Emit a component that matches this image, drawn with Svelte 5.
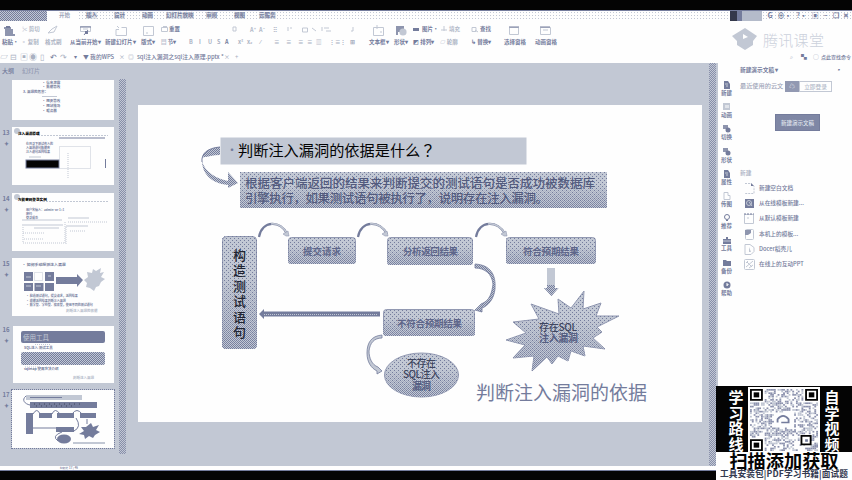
<script>
  const tabs = [[59,'开始'],[86,'插入'],[114,'设计'],[142,'动画'],[166,'幻灯片放映'],[206,'审阅'],[234,'视图'],[259,'云服务'],[300,'']];
  const labels = [[2,'粘贴·',1],[21,'▫ 复制'],[45,'格式刷'],[70,'从当前开始▾',1],[105,'新建幻灯片▾',1],[141,'版式▾',1],[161,'▤ 节▾',1],[189,'B'],[199,'I'],[208,'U'],[217,'S'],[225,'A',1],[238,'x²'],[247,'x₂'],[260,'⁄'],[274,'≡'],[286,'≡'],[298,'≡'],[307,'≡'],[316,'▥'],[329,'⋮≡'],[340,'⋮'],[350,'⊞'],[369,'文本框▾',1],[394,'形状▾',1],[413,'◩ 排列▾',1],[440,'▱ 轮廓'],[471,'↳ 替换▾',1],[504,'选择窗格',1],[535,'动画窗格',1],[570,'']];
  const quick = [[0,'▱'],[10,'⊟'],[20,'▣'],[29,'◉'],[40,'▯'],[50,'↶',1],[60,'↷'],[74,'▾',1],[83,'▼ 我的WPS',1],[119,'×'],[128,'◎'],[137,'sql注入漏洞之sql注入原理.pptx *',1],[224,'×'],[235,'+'],[790,'⌕'],[801,'▚',1],[813,'○'],[821,'点此查找命令',1],[852,'']];
  const widths = (rows) => rows.slice(0, -1).map((r, i) => ({ t: r[1], d: r[2], w: rows[i + 1][0] - r[0] }));
  const rail = ['新建','动画','切换','形状','属性','传图','推荐','工具','备份','帮助'];
  const news = ['新建空白文档','从在线模板新建...','从默认模板新建','本机上的模板...','Docer稻壳儿','在线上的互动PPT'];
  let seed = 29;
  const rnd = () => (seed = (seed * 16807) % 2147483647) / 2147483647;
  const cells = [];
  for (let y = 0; y < 37; y++) for (let x = 0; x < 37; x++) {
    const r = rnd();
    if ((x < 8 && y < 8) || (x > 28 && y < 8) || (x < 8 && y > 28) || (x > 12 && x < 24 && y > 13 && y < 23) || (x > 26 && x < 33 && y > 26 && y < 33)) continue;
    if (r < 0.5) cells.push([x, y, r < 0.27 ? '#8b91ad' : '#bfc5d2']);
  }
  const boxes = [[288,237,68,27,'提交请求',303,38],[387,237,86,28,'分析返回结果',403,55],[506,237,90,27,'符合预期结果',523,56],[383,309,92,27,'不符合预期结果',397,65]];
  const arcs = ['M259 237C262 220 281 220 287 234','M358 237C361 220 380 220 387 234','M476 237C479 220 498 220 505 234'];
  const star = '584,291 571,308 558,299 559,314 531,304 539,319 513,322 526,333 506,340 525,345 513,358 534,356 532,371 547,357 552,364 558,356 568,361 571,351 585,356 583,346 605,349 593,338 602,332 597,327 619,316 596,316 601,303 583,309';
</script>

{#snippet mini()}
  <rect x="14" y="5" width="56" height="5" class="l"/><path d="M18 7.500H50" class="s"/><rect x="18" y="12" width="67" height="6" class="k"/><path d="M22 14h50M24 16h40" stroke="#40465f" stroke-dasharray="1 4"/>
  <path d="M14 6C9 10 13 14 18 15M21 24Q25 17 28 24M40 24Q43 17 48 24M60 24Q65 17 70 24M64 28Q70 37 62 41M50 42Q39 46 46 51" class="s"/>
  <rect x="14" y="23" width="7" height="21" class="k"/><rect x="27" y="23" width="13" height="5" class="k"/><rect x="45" y="23" width="17" height="5" class="k"/><rect x="68" y="23" width="16" height="5" class="k"/><rect x="44" y="37" width="18" height="5" class="k"/>
  <path d="M21 38H44M75 29V34" class="s"/><ellipse cx="52" cy="49" rx="7" ry="4.500" class="k"/>
  <path d="M79 33l2 4 6-2-3 5 4 2-5 3-2 3-4-2-4 3-1-4-5-1 5-3-3-4 5 0z" class="k"/><rect x="61" y="52" width="32" height="2" class="l"/>
{/snippet}

<div class="app">
  <div class="black"></div>
  <header class="tabs">
    <div class="brand"></div><div class="active"></div>
    <div class="tabrow">{#each widths(tabs) as t}<span style:width={t.w + 'px'}><b>{t.t}</b></span>{/each}</div>
    <div class="user"></div><div class="win"><b>G</b><b>⊕·</b><b>?·</b><b>▣</b><b>–</b><b>❐</b><b>✕</b></div>
  </header>
  <section class="ribbon">
    <div class="icons">
      <svg width="730" height="17" viewBox="0 20 730 17">
        <path d="M4 26h7v2h2v5h2v2H5v-7H4zM396 25h8v6h-6v3h-2z" class="m"/><circle cx="403" cy="31" r="3.600" class="l"/>
        <path d="M6 25h4v2H6z" class="k"/>
        <path d="M80.500 25.500h10v5h-10zM83 28h5M119 28.500h-3v6h10.500v-8h-5M117 25l2 2M143.500 25.500h10v9h-10zM146 32h2M161.500 26.500h6v4h-6zM163 25.500h4M233 26h3v4h-3zM312 27l4 3M322 26v4M324 27h5M326 30h5M288 26v4M290 27h2M353 26v4h-2M302.500 27h5v4h-5zM373.500 26.500h10v8h-10zM377 24v4M381 30v2M509.500 26.500h9v7h-9zM540.500 26.500h10v7h-10zM543 29h5M472 26.500h4v4h-4zM475 29l3 2M441 29h6M444 25v5M48 32l4-4 5-3-3 6z" class="ls"/>
        <path d="M80 26h11M509 26h10M540 26h10M84 34l4-5" class="s"/><path d="M85 30h3v3h-3zM413 27h6v3h-6z" class="k"/>
        <g class="tiny"><text x="22" y="30">✂ 剪切</text><text x="169" y="30" class="dk">重置</text><text x="250" y="31">A⁺</text><text x="259" y="31">A⁻</text><text x="273" y="31">⠿</text><text x="422" y="30" class="dk">图片·</text><text x="449" y="30">填充</text><text x="480" y="30" class="dk">查找</text></g>
      </svg>
      <div class="brandlogo"><svg width="27" height="24" viewBox="0 0 27 24"><path d="M13 0 25 8 21 13V17L13 22 5 17V13L0 8Z" class="l"/><path d="M11 6v5l5-2z" fill="#fefefe"/></svg><span>腾讯课堂</span></div>
    </div>
    <div class="labels">{#each widths(labels) as t}<span class:dk={t.d} style:width={t.w + 'px'}>{t.t}</span>{/each}</div>
    <div class="quick">{#each widths(quick) as t}<span class:dk={t.d} style:width={t.w + 'px'}>{t.t}</span>{/each}</div>
  </section>

  <main>
    <aside class="left">
      <div class="lhead"><span>大纲</span><span>幻灯片</span></div>
      <div class="row" style:height="47px"><i></i><svg width="102" height="40" class="th"><g class="tiny dk"><text x="30" y="3.500">· 信息泄露</text><text x="30" y="8">· 数据篡改</text><text x="11" y="13">3. 漏洞的危害：</text></g><path d="M30 16.500h15" class="ls"/><g class="tiny dk"><text x="30" y="22">· 网页篡改</text><text x="30" y="27">· 网站挂马</text><text x="30" y="32">· 服务器</text></g></svg></div>
      <div class="row" style:height="66px"><i>13<br/>✦</i><svg width="102" height="58" class="th"><circle cx="5" cy="4" r="3" class="l"/><text x="6" y="7.500" class="bt">注入漏洞原理</text><path d="M26 8.500H96" class="ls" stroke-dasharray="2 1"/><path d="M47 11H93" class="s"/><g class="tiny thin dk"><text x="14" y="17.500">在目录下测试传入的</text><text x="14" y="21.500">入漏洞语句数据库</text><text x="14" y="25.500">注入语句返回结果</text></g><path d="M17 30h12" class="ls"/><rect x="14" y="33" width="33" height="8" fill="#040404" stroke="#747c9c"/><path d="M47.500 19.500h31v22h-31zM56 26v26" class="dots"/><path d="M93.500 32v9" class="s"/></svg></div>
      <div class="row" style:height="65px"><i>14<br/>✦</i><svg width="102" height="58" class="th"><circle cx="5" cy="4" r="3" class="l"/><text x="6" y="7.500" class="bt">万能密码登录实例</text><path d="M31 8.500H96" class="ls" stroke-dasharray="2 1"/><g class="tiny thin dk"><text x="14" y="17.500">用户名输入：admin' or 1=1</text><text x="14" y="21.500">密码</text><text x="14" y="25.500">登录成功</text></g><path d="M10 27h40M56 25h21M10 32h41M54 33h22M22 35h25" class="ls"/><path d="M11 34v16h42V28M54 34v17M56 29h40M11 40h22M58 38h16M12 46h19" class="dots"/></svg></div>
      <div class="row" style:height="66px"><i>15<br/>✦</i><svg width="102" height="58" class="th"><text x="10" y="8" class="mt">• 如何手动探测注入漏洞</text><g class="k"><rect x="12" y="14" width="9" height="9"/><rect x="33" y="14" width="9" height="9"/><rect x="12" y="25" width="9" height="8"/><rect x="22.500" y="25" width="9" height="8"/><rect x="33" y="25" width="9" height="8"/><path d="M44 19h21v-3l6 6-6 7v-3H44z"/></g><rect x="22.500" y="14.500" width="8" height="8" class="dots"/><path d="M14 19h5M14 28h5M24 28h5M36 18h3" class="ls"/><path d="m89 10-1 5 4-1-3 5 4 2-4 3-2 4-3 1-2 4-4-3-4-1 1-4-3-3 4-3-1-5 5 1 1-4 3 2z" class="l"/><g class="tiny thin dk"><text x="14" y="39">• 构造测试语句，提交请求，返回结果</text><text x="14" y="43.500">• 根据返回结果判断注入漏洞</text><text x="14" y="48">• 数字型、字符型、搜索型，使用不同的测试语句</text></g><text x="54" y="53.500" class="tiny">判断注入漏洞的依据</text></svg></div>
      <div class="row" style:height="65px"><i>16<br/>✦</i><svg width="101" height="57" class="th"><rect x="8" y="5" width="84" height="12" rx="2" class="k"/><text x="10" y="14" fill="#c2c8d4" font-size="6.500">使用工具</text><rect x="8" y="26" width="84" height="13" rx="2" fill="url(#mid)"/><g class="tiny dk"><text x="11" y="23">SQL注入 测试工具</text><text x="11" y="44">sqlmap 使用方法介绍</text></g><path d="M22 18.500h16M12 41h16" class="dots"/><text x="60" y="53" class="tiny">判断注入漏洞</text></svg></div>
      <div class="row" style:height="65px"><i>17<br/>✦</i><svg width="102" height="58" class="th sel">{@render mini()}</svg></div>
    </aside>
    <div class="scroll"></div>
    <section class="stage">
      <svg class="slide" width="564" height="317" viewBox="138 105 564 317">
        <defs>
          <pattern id="spr" width="4" height="4" patternUnits="userSpaceOnUse"><path d="M0 0h1v1H0zM2 2h1v1H2z" fill="#747c9c"/></pattern>
          <pattern id="mid" width="2" height="2" patternUnits="userSpaceOnUse"><rect width="2" height="2" fill="#c2c8d4"/><path d="M0 0h1v1H0zM1 1h1v1H1z" fill="#747c9c"/></pattern>
          <linearGradient id="fade" x2="0" y2="1"><stop offset=".35" stop-color="#000"/><stop offset="1" stop-color="#fff"/></linearGradient>
          <mask id="lower" maskContentUnits="objectBoundingBox"><rect width="1" height="1" fill="url(#fade)"/></mask>
        </defs>
        <rect x="220.500" y="137.500" width="306" height="27" class="l"/>
        <text x="226" y="155" font-size="12" class="dk">·</text><text x="238" y="156" class="h1">判断注入漏洞的依据是什么<tspan class="tc">？</tspan></text>
        <path d="M220 147C207 148 201 154 202 161 205 173 218 179 228 181V172L238 183 228 188V185C211 183 202 174 202 160V157C206 158 212 155 220 155Z" fill="url(#mid)"/>
        <path d="M220 147C207 148 201 154 202 162" class="s"/>
        <rect x="240" y="172" width="367" height="36" class="l"/><rect x="240" y="172" width="367" height="36" fill="url(#spr)"/><rect x="240" y="172" width="367" height="36" fill="url(#mid)" mask="url(#lower)"/>
        <text x="245" y="188" class="body" textLength="350">根据客户端返回的结果来判断提交的测试语句是否成功被数据库</text>
        <text x="245" y="203" class="body" textLength="303">引擎执行，如果测试语句被执行了，说明存在注入漏洞。</text>
        <g stroke="#9299b2" stroke-width="1">
          {#each boxes as b}<rect x={b[0]+.5} y={b[1]+.5} width={b[2]-1} height={b[3]-1} rx="3" class="l"/><rect x={b[0]} y={b[1]} width={b[2]} height={b[3]} rx="3" fill="url(#spr)" stroke="none"/><rect x={b[0]} y={b[1]} width={b[2]} height={b[3]} rx="3" fill="url(#mid)" stroke="none" mask="url(#lower)"/>{/each}
          <rect x="222.500" y="236.500" width="34" height="112" rx="4" class="l"/><rect x="222" y="236" width="35" height="113" rx="4" fill="url(#spr)" stroke="none"/><rect x="222" y="236" width="35" height="113" rx="4" fill="url(#mid)" stroke="none" mask="url(#lower)"/>
          <ellipse cx="421.500" cy="375" rx="37" ry="22" class="l"/><ellipse cx="421.500" cy="375" rx="37" ry="22" fill="url(#spr)" stroke="none"/><ellipse cx="421.500" cy="375" rx="37" ry="22" fill="url(#mid)" stroke="none" mask="url(#lower)"/>
          <polygon points={star} class="l"/><polygon points={star} fill="url(#spr)" stroke="none"/><polygon points={star} fill="url(#mid)" stroke="none" mask="url(#lower)"/>
        </g>
        {#each boxes as b}<text x={b[5]} y={b[1]+17.500} class="box" textLength={b[6]}>{b[4]}</text>{/each}
        {#each [...'构造测试语句'] as c, i}<text x="233" y={259.500 + i * 15.500} class="vert">{c}</text>{/each}
        {#each arcs as a}<path d={a} fill="none" stroke="#747c9c" stroke-width="2.200"/><path d={a} fill="none" stroke="#c2c8d4" stroke-width="1.500" stroke-dasharray="0 19 30"/>{/each}
        {#each [289,388,507] as x}<path d="M{x-6} 234l5-3 1 5-3 0z" class="l" stroke="#9299b2" stroke-width=".6"/>{/each}
        <path d="M475 264C491 265 496 275 495 289 494 299 488 306 482 308V312L475 310 481 304C490 301 492 292 493 284 492 274 485 268 475 268Z" fill="url(#mid)" stroke="#747c9c" stroke-width=".8"/>
        <path d="M382 335C371 336 367 343 367 353 367 362 371 368 377 371L377 374 382 371 378 367C372 365 369 358 369 351 370 343 374 338 382 338Z" class="l" stroke="#747c9c" stroke-width=".8"/>
        <path d="M259 314L264 309V311.500H380V316.500H264V319Z" class="k"/><path d="M264 314.500H378" class="ls" stroke-dasharray="1 1"/>
        <path d="M547 268h8v20h3.500L551.500 296 544 288h3z" class="l"/><path d="M547 285v3h-3l7.500 8 7-8H555v-3" fill="url(#mid)"/>
        <text x="407" y="367" class="el" textLength="29">不存在</text><text x="403" y="378" class="el" textLength="37">SQL注入</text><text x="412" y="389.500" class="el md" textLength="19">漏洞</text>
        <text x="539" y="330.500" class="el" textLength="38">存在SQL</text><text x="539" y="342" class="el md" textLength="39">注入漏洞</text>
        <text x="476" y="400" class="foot" textLength="171">判断注入漏洞的依据</text>
      </svg>
    </section>
    <div class="scroll right"></div>
    <nav class="rail">{#each rail as r, i}<div><svg width="8" height="8" viewBox="0 0 8 8">
      {#if i === 9}<circle cx="4" cy="4" r="3.500" class="k"/><path d="M3 3h2v1H4v1" stroke="#fff" fill="none"/>
      {:else if i === 6}<circle cx="4" cy="3" r="2.500" class="s"/><path d="M3 6.500h2" class="s"/>
      {:else if i === 7}<path d="M3 1h2v2h3v5H0V3h3z" class="k"/><path d="M0 5h8" class="ls"/>
      {:else if i === 1}<rect width="7" height="7" class="l"/><path d="M3 2v3M5 2v3" stroke="#fff"/>
      {:else if i === 2 || i === 3}<path d="M0 0h5v4H0z" class="m"/><circle cx="5" cy="5" r="2.500" class="k"/>
      {:else if i === 5}<path d="M1 .5h4v3h2v4H1z" class="ls"/>
      {:else if i === 8}<path d="M0 1h3l1 1h4v5H0z" class="k"/>
      {:else}<path d="M1 0h4l2 3v5H1z" class="k"/><path d="M2 3h3M3 5h2" class="ls"/>{/if}</svg><span>{r}</span></div>{/each}</nav>
    <aside class="pane">
      <div class="pt"><span>新建演示文稿 ▾</span><i>▪</i></div>
      <div class="login"><span>最近使用的云文</span><b>☁</b><em>立即登录</em></div>
      <button>新建演示文稿</button>
      <div class="nh">新建</div>
      {#each news as n, i}<div class="ni"><svg width="11" height="11" viewBox="0 0 11 11">
        {#if i === 0}<path d="M1 .5h6l3 3v7H1" class="ls" stroke-dasharray="2 1"/><path d="M7 0v3h3z" class="k"/>
        {:else if i === 1}<rect x="1" y="1" width="9" height="9" class="k"/><circle cx="5" cy="5" r="2.500" class="ls"/><path d="M5 4l3 4" class="ls"/>
        {:else if i === 2}<path d="M.5 1.500h9v9h-9zM3 5h2" class="ls"/><path d="M0 1h10" class="s" stroke-dasharray="2 1"/>
        {:else if i === 3}<rect x="1.500" y=".5" width="8" height="10" rx="1" class="ls"/><path d="M1 1h6v3L4 6H1z" class="m"/>
        {:else if i === 4}<path d="M1 .5h5l4 3v4l-3 3H1z" class="ls"/><path d="M5 3v5h2z" class="l"/>
        {:else}<rect x=".5" y=".5" width="10" height="10" rx="1" class="ls"/><path d="M2 8l7-6M2 4l2-2M5 9l4-3M3 3l5 5" class="ls"/>{/if}</svg><span>{n}</span></div>{/each}
    </aside>
  </main>
  <div class="status"><span>幻灯片 17 / 46</span></div>
  <div class="black end"></div>

  <div class="promo">
    <div class="ptop"><div class="pv">{#each '学习路线' as c}<span>{c}</span>{/each}</div>
      <div class="qr"><svg width="68" height="62" viewBox="0 0 37 37" preserveAspectRatio="none">
        {#each cells as c}<rect x={c[0]} y={c[1]} width="1" height="1" fill={c[2]}/>{/each}
        {#each [[0,0],[30,0],[0,30]] as f}<path d="M{f[0]+.5} {f[1]+.5}h6v6h-6z" fill="none" stroke="#040404"/><rect x={f[0]+2} y={f[1]+2} width="3" height="3" fill="#040404"/>{/each}
        <path d="M28 28h5v5h-5z" fill="none" stroke="#040404"/><rect x="30" y="30" width="1.500" height="1.500" class="k"/><path d="M15 20V18Q18 14 21 18V20H17" class="s"/>
      </svg></div>
      <div class="pv">{#each '自学视频' as c}<span>{c}</span>{/each}</div></div>
    <div class="scan">扫描添加获取</div><div class="tools">工具安装包|PDF学习书籍|面试题</div>
  </div>
</div>

<style>
  :global(body) { margin: 0; overflow: hidden; }
  .app { width: 852px; height: 480px; display: flex; flex-direction: column; position: relative; overflow: hidden; background: #fefefe; color: #747c9c; font-family: "Noto Sans CJK SC", "Liberation Sans", sans-serif; }
  svg { display: block; flex: none; }
  .black { height: 10px; flex: none; background: #040404; border-bottom: 1px solid #747c9c; }
  .black.end { height: 9px; border: 0; border-top: 1px solid #747c9c; }
  .tabs { height: 10px; flex: none; display: flex; background: radial-gradient(#c2c8d4 35%, transparent 36%) 0 0/3px 3px #fefefe; }
  .brand { width: 47px; background: repeating-conic-gradient(#747c9c 0 25%, #c2c8d4 0 50%) 0 0/2px 2px; }
  .active { width: 32px; background: #fefefe; }
  .tabrow { display: flex; margin-left: -20px; width: 642px; }
  .tabs b { font-size: 5.500px; line-height: 9px; font-weight: 700; display: block; white-space: nowrap; }
  .tabrow span:not(:first-child) b { background: #c2c8d480; width: max-content; height: 7px; line-height: 7px; margin-top: 1px; }
  .tabrow span:first-child b { color: #9da4b8; }
  .user { width: 32px; margin-left: 29px; background: linear-gradient(90deg, #34384a 0 7px, #747c9c 7px 12px, #b4bbca 12px); }
  .win { display: flex; flex: 1; justify-content: space-around; padding-left: 3px; } .tabs .win b { font-size: 7px; }
  .ribbon { height: 42px; flex: none; display: flex; flex-direction: column; }
  .icons { height: 16px; display: flex; }
  .brandlogo { display: flex; height: 16px; padding-top: 7px; margin-left: 2px; color: #ccd1dc; font-size: 15px; font-weight: 300; line-height: 24px; gap: 4px; white-space: nowrap; }
  .brandlogo span { letter-spacing: .3px; }
  .labels { padding-left: 2px; height: 10px; display: flex; font-size: 5.500px; line-height: 10px; color: #aab1c2; font-weight: 700; }
  .quick { margin-top: 5px; height: 11px; display: flex; font-size: 5.800px; line-height: 10px; color: #aab1c2; font-weight: 500; }
  .labels span, .quick span { flex: none; white-space: nowrap; } .quick span:nth-child(-n+7) { font-size: 8px; } .quick span:last-child { font-size: 5px; }
  .dk { color: #747c9c !important; fill: #747c9c !important; }
  .k { fill: #747c9c; } .l { fill: #c2c8d4; } .m { fill: #8e95ae; }
  .s { fill: none; stroke: #747c9c; } .ls { fill: none; stroke: #c2c8d4; } .dots { fill: none; stroke: #c2c8d4; stroke-dasharray: 1 1; }
  .tiny text, text.tiny { font-size: 5px; fill: #b4bbca; } .icons .tiny text { font-size: 5.500px; font-weight: 700; } .left .tiny text, .left text.tiny { font-size: 3.500px; font-weight: 700; } .tiny.dk text { fill: #747c9c; } .left .thin text { font-size: 3px; }
  main { height: 403px; flex: none; display: flex; background: #c2c8d4; }
  main > * { flex: none; box-sizing: border-box; }
  .left { width: 119px; height: 403px; overflow: hidden; font-size: 6px; background: #c2c8d4; }
  .lhead { height: 17px; box-sizing: border-box; padding: 4px 2px; line-height: 8px; display: flex; gap: 8px; font-weight: 500; }
  .lhead span:last-child { color: #9299b2; }
  .row { display: flex; } .row i { font-style: normal; width: 12px; text-align: center; line-height: 11px; flex: none; font-size: 6px; font-weight: 700; }
  .th { background: #fefefe; } .sel { outline: 1px dotted #747c9c; }
  .bt { font-size: 3.600px; font-weight: 900; fill: #040404; } .mt { font-size: 3.900px; fill: #747c9c; font-weight: 700; }
  .row:nth-child(6) .th { margin: 2px 0 0 1px; } .row:nth-child(7) .th { margin-top: 1px; }
  .scroll { width: 7px; background: repeating-conic-gradient(#747c9c 0 25%, #c2c8d4 0 50%) 0 0/2px 2px; opacity: .75; height: 375px; margin-top: 16px; }
  .scroll.right { height: 403px; width: 7px; margin: 0 2px 0 7px; }
  .stage { width: 576px; padding: 42px 0 0 12px; } .slide { background: #fefefe; }
  .h1 { font-size: 15.200px; fill: #040404; } .tc { font-family: "Noto Sans CJK TC", sans-serif; } .body { font-size: 12.500px; fill: #535b7e; font-weight: 500; }
  .box { font-size: 9.500px; fill: #5e668a; font-weight: 700; } .vert { font-size: 13px; fill: #202431; font-weight: 500; }
  .el { font-size: 10px; fill: #40465f; font-weight: 500; } .md { fill: #565e82; font-weight: 700; } .foot { font-size: 19px; fill: #747c9c; }
  .rail { width: 17px; background: #fefefe; padding: 18px 0 0; }
  .rail div { height: 22.200px; display: flex; flex-direction: column; align-items: center; } .rail span { font-size: 5.500px; line-height: 9px; font-weight: 700; }
  .pane { width: 117px; background: #fefefe; padding-left: 5px; font-size: 5.700px; display: flex; flex-direction: column; font-weight: 500; }
  .pt { margin-top: 2px; height: 10px; line-height: 9px; display: flex; font-weight: 700; } .pt i { margin-left: 57px; }
  .login { display: flex; height: 11px; margin-top: 6px; line-height: 9px; color: #9da4b8; white-space: nowrap; } .login span { width: 45px; flex: none; font-size: 6.200px; }
  .login b { width: 14px; background: #9299b2; color: #fefefe; text-align: center; } .login em { width: 31px; border: 1px solid #c2c8d4; font-style: normal; text-align: center; color: #b4bbca; }
  button { margin: 22px 0 0 35px; width: 45px; height: 17px; flex: none; border: 1px solid #747c9c; padding: 0; font: 500 5.500px "Noto Sans CJK SC", sans-serif; color: #dfe3ec; background: #7f87a5; }
  .nh { margin-top: 37px; height: 15px; line-height: 10px; color: #aab1c2; flex: none; }
  .ni { height: 15.200px; flex: none; padding-left: 4px; display: flex; align-items: flex-start; gap: 4px; line-height: 10px; white-space: nowrap; }
  .status { height: 4px; flex: none; background: #fefefe; font-size: 2.800px; line-height: 4px; padding-left: 60px; font-weight: 700; }
  .promo { position: absolute; left: 716px; top: 386px; width: 136px; height: 94px; background: #fefefe; color: #040404; }
  .ptop { height: 66px; display: flex; background: #040404; color: #fefefe; } .pv { width: 32px; display: flex; flex-direction: column; align-items: center; padding-top: 3px; font-weight: 700; font-size: 15px; box-sizing: border-box; } .pv:first-child { padding-left: 8px; } .pv:last-child { padding-right: 8px; } .pv span { height: 15.500px; line-height: 15.500px; }
  .qr { width: 72px; height: 65px; background: #fefefe; padding: 2px 2px 1px; box-sizing: border-box; margin-top: 1px; }
  .scan { height: 17px; line-height: 16px; font-size: 18.200px; font-weight: 700; text-align: center; white-space: nowrap; }
  .tools { height: 11px; line-height: 9px; font-size: 8.700px; font-weight: 700; white-space: nowrap; text-align: center; color: #343a51; letter-spacing: .1px; }
</style>
